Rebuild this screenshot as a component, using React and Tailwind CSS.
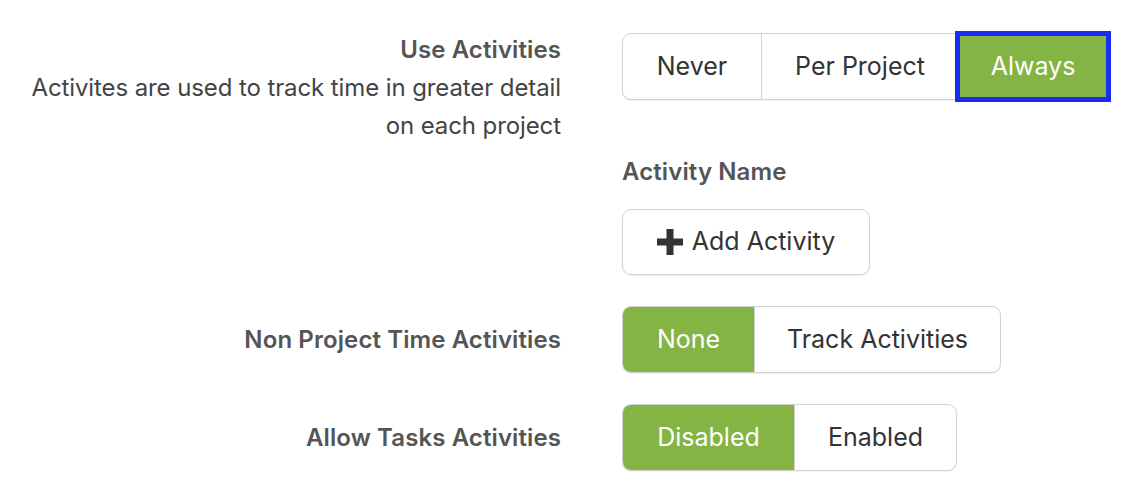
import React from "react";

function Seg({ items }) {
  return (
    <div className="flex h-[67px] rounded-[9px] border border-[#d2d2d2] bg-white text-[25px] shadow-[0_1px_1px_rgba(0,0,0,0.06)]">
      {items.map((it, i) => (
        <div
          key={it.label}
          className={
            "relative flex items-center justify-center " +
            it.w +
            (i > 0 ? " border-l border-[#d2d2d2]" : "") +
            (i === 0 ? " rounded-l-[8px]" : "") +
            (i === items.length - 1 ? " rounded-r-[8px]" : "") +
            (it.active ? " bg-[#84b444] text-white border-l-0" : " text-[#333]")
          }
        >
          {it.label}
          {it.focus && (
            <div className="absolute -top-[3px] -bottom-[3px] -left-[3px] -right-[3px] border-[5px] border-[#1a2cf3]" />
          )}
        </div>
      ))}
    </div>
  );
}

export default function App() {
  return (
    <div
      className="w-[1138px] h-[504px] bg-white text-[24px] overflow-hidden"
      style={{ fontFamily: "Inter, 'Open Sans', sans-serif" }}
    >
      <div className="pt-[31px] flex flex-col">
        <div className="flex">
          <div className="w-[561px] text-right leading-[38px]">
            <div className="font-semibold text-[#555] tracking-[0.1px]">Use Activities</div>
            <div className="text-[#444] tracking-[-0.1px]">
              Activites are used to track time in greater detail
              <br />
              on each project
            </div>
          </div>
          <div className="ml-[61px] mt-[2px] flex flex-col items-start">
            <Seg
              items={[
                { label: "Never", w: "w-[138px]" },
                { label: "Per Project", w: "w-[197px]" },
                { label: "Always", w: "w-[150px]", active: true, focus: true },
              ]}
            />
            <div className="mt-[53px] leading-[38px] font-semibold text-[#555] tracking-[0.1px]">Activity Name</div>
            <div className="mt-[18px] flex h-[66px] w-[248px] items-center justify-center gap-[9px] rounded-[9px] border border-[#d2d2d2] text-[25px] text-[#333] shadow-[0_1px_1px_rgba(0,0,0,0.06)]">
              <svg width="26" height="26" viewBox="0 0 26 26">
                <rect x="9.5" y="0" width="7" height="26" fill="#333" />
                <rect x="0" y="9.5" width="26" height="7" fill="#333" />
              </svg>
              <span>Add Activity</span>
            </div>
          </div>
        </div>
        <div className="mt-[31px] flex items-center">
          <div className="w-[561px] text-right font-semibold text-[#555] tracking-[0.1px]">Non Project Time Activities</div>
          <div className="ml-[61px]">
            <Seg
              items={[
                { label: "None", w: "w-[131px]", active: true },
                { label: "Track Activities", w: "w-[246px]" },
              ]}
            />
          </div>
        </div>
        <div className="mt-[31px] flex items-center">
          <div className="w-[561px] text-right font-semibold text-[#555] tracking-[0.1px]">Allow Tasks Activities</div>
          <div className="ml-[61px]">
            <Seg
              items={[
                { label: "Disabled", w: "w-[171px]", active: true },
                { label: "Enabled", w: "w-[162px]" },
              ]}
            />
          </div>
        </div>
      </div>
    </div>
  );
}
